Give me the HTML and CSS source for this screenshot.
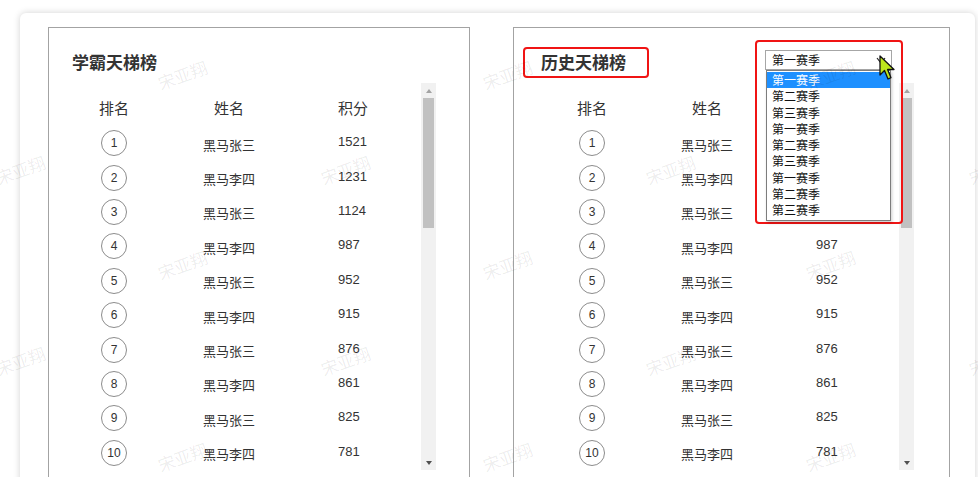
FILE: index.html
```html
<!DOCTYPE html>
<html lang="zh-CN">
<head>
    <meta charset="UTF-8">
    <meta name="viewport" content="width=device-width, initial-scale=1.0">
    <title>天梯榜</title>
    <link rel="stylesheet" href="styles.css">
</head>
<body>
    <div class="card">
        <div class="panels">
            <section class="panel panel-left">
                <div class="panel-head">
                    <h2 class="title">学霸天梯榜</h2>
                </div>
                <div class="rank-scroll">
                    <div class="rank-table" id="rank-left"></div>
                    <div class="scrollbar">
                        <div class="sb-btn"><i class="sb-up"></i></div>
                        <div class="sb-thumb"></div>
                        <div class="sb-btn sb-end"><i class="sb-down"></i></div>
                    </div>
                </div>
            </section>

            <section class="panel panel-right">
                <div class="panel-head">
                    <h2 class="title marked">历史天梯榜</h2>
                </div>
                <div class="rank-scroll">
                    <div class="rank-table" id="rank-right"></div>
                    <div class="scrollbar">
                        <div class="sb-btn"><i class="sb-up"></i></div>
                        <div class="sb-thumb"></div>
                        <div class="sb-btn sb-end"><i class="sb-down"></i></div>
                    </div>
                </div>

                <!-- opened season dropdown -->
                <div class="season-picker">
                    <div class="season-select">
                        第一赛季
                        <svg class="chevron" width="10" height="7" viewBox="0 0 10 7">
                            <polyline points="1,1 5,6 9,1" fill="none" stroke="#222" stroke-width="1.2"/>
                        </svg>
                    </div>
                    <ul class="season-list">
                        <li class="active">第一赛季</li>
                        <li>第二赛季</li>
                        <li>第三赛季</li>
                        <li>第一赛季</li>
                        <li>第二赛季</li>
                        <li>第三赛季</li>
                        <li>第一赛季</li>
                        <li>第二赛季</li>
                        <li>第三赛季</li>
                    </ul>
                </div>
                <svg class="cursor" width="17" height="26" viewBox="0 0 17 26">
                    <path d="M1 1 L1 20 L5.5 15.5 L9 24 L12 22.7 L8.6 14.5 L15 14.5 Z" fill="#bde61c" stroke="#111" stroke-width="1.3" stroke-linejoin="round"/>
                </svg>
            </section>
        </div>
    </div>

    <div class="watermark" id="watermark"></div>

    <script>
        // 榜单数据
        const scores = [1521, 1231, 1124, 987, 952, 915, 876, 861, 825, 781];

        function renderTable(el) {
            const head = document.createElement('div');
            head.className = 'rank-row rank-head';
            head.innerHTML = '<span class="col-rank">排名</span><span class="col-name">姓名</span><span class="col-score">积分</span>';
            el.appendChild(head);

            scores.forEach((score, i) => {
                const row = document.createElement('div');
                row.className = 'rank-row';

                const rank = document.createElement('span');
                rank.className = 'col-rank';
                const badge = document.createElement('i');
                badge.className = 'badge';
                badge.textContent = i + 1;
                rank.appendChild(badge);

                const name = document.createElement('span');
                name.className = 'col-name name';
                name.textContent = i % 2 === 0 ? '黑马张三' : '黑马李四';

                const num = document.createElement('span');
                num.className = 'col-score score';
                num.textContent = score;

                row.appendChild(rank);
                row.appendChild(name);
                row.appendChild(num);
                el.appendChild(row);
            });
        }

        renderTable(document.getElementById('rank-left'));
        renderTable(document.getElementById('rank-right'));

        // 水印
        const marks = document.getElementById('watermark');
        const rowsY = [75, 170, 265, 361, 457];
        rowsY.forEach((y, r) => {
            const xs = r % 2 === 0 ? [157, 482, 805] : [-5, 320, 645, 968];
            xs.forEach(x => {
                const s = document.createElement('span');
                s.textContent = '宋亚翔';
                s.style.left = x + 'px';
                s.style.top = (y - 12) + 'px';
                marks.appendChild(s);
            });
        });
    </script>
</body>
</html>
```

FILE: styles.css
```css
/* Global */
html, body {
    margin: 0;
    padding: 0;
    overflow: hidden;
    background: #ffffff;
}

body {
    font-family: "Liberation Sans", "Noto Sans CJK SC", sans-serif;
    color: #333333;
}

.card {
    margin: 13px 0 0 20px;
    width: 955px;
    height: 480px;
    padding: 14px 0 0 28px;
    box-sizing: border-box;
    background: #ffffff;
    border-radius: 6px;
    box-shadow: 0 0 7px rgba(0, 0, 0, 0.18);
}

.panels {
    display: flex;
    gap: 43px;
}

.panel {
    position: relative;
    height: 470px;
    border: 1px solid #a3a3a3;
    box-sizing: border-box;
}

.panel-left {
    width: 422px;
}

.panel-right {
    width: 437px;
}

/* Title */
.panel-head {
    height: 55px;
    padding-top: 19px;
    box-sizing: border-box;
    display: flex;
    align-items: flex-start;
}

.panel-left .panel-head {
    padding-left: 5px;
}

.panel-right .panel-head {
    padding-left: 9px;
}

.title {
    margin: 0;
    height: 31px;
    padding: 0 21px 0 16px;
    box-sizing: border-box;
    border: 2px solid transparent;
    border-radius: 4px;
    font-family: "Noto Sans CJK SC", sans-serif;
    font-size: 17px;
    font-weight: bold;
    line-height: 26px;
    color: #333333;
}

.title.marked {
    border-color: #f01414;
}

/* Ranking table */
.rank-scroll {
    display: flex;
    width: 357px;
    height: 387px;
}

.panel-left .rank-scroll {
    margin-left: 30px;
}

.panel-right .rank-scroll {
    margin-left: 43px;
}

.rank-table {
    flex: 1;
    overflow: hidden;
}

.scrollbar {
    width: 15px;
    display: flex;
    flex-direction: column;
    background: #f1f1f1;
}

.sb-btn {
    height: 15px;
    display: flex;
    align-items: center;
    justify-content: center;
}

.sb-end {
    margin-top: auto;
}

.sb-up {
    width: 0;
    height: 0;
    border-left: 3.5px solid transparent;
    border-right: 3.5px solid transparent;
    border-bottom: 4px solid #a3a3a3;
}

.sb-down {
    width: 0;
    height: 0;
    border-left: 3.5px solid transparent;
    border-right: 3.5px solid transparent;
    border-top: 4px solid #505050;
}

.sb-thumb {
    height: 130px;
    margin: 0 2px;
    background: #c1c1c1;
}

.rank-row {
    display: grid;
    grid-template-columns: 70px 160px 1fr;
    align-items: center;
    height: 34.4px;
    font-size: 13px;
}

.rank-head {
    height: 43px;
    padding-bottom: 7px;
    box-sizing: border-box;
    align-items: end;
    font-family: "Noto Sans CJK SC", sans-serif;
    font-size: 15px;
    line-height: 22px;
    color: #333333;
}

.col-rank,
.col-name {
    text-align: center;
}

.col-score {
    padding-left: 29px;
}

.badge {
    display: inline-block;
    width: 26px;
    height: 26px;
    border: 1px solid #8c8c8c;
    border-radius: 50%;
    box-sizing: border-box;
    font-style: normal;
    font-size: 12px;
    line-height: 24px;
    text-align: center;
    color: #333333;
    vertical-align: middle;
}

.name {
    padding-top: 5px;
    line-height: 18px;
    color: #333333;
}

.score {
    padding-bottom: 2px;
    line-height: 18px;
    color: #333333;
}

/* Season dropdown */
.season-picker {
    position: absolute;
    left: 241px;
    top: 12px;
    width: 148px;
    height: 184px;
    border: 2px solid #f01414;
    border-radius: 4px;
    box-sizing: border-box;
    z-index: 2;
}

.season-select {
    position: absolute;
    left: 8px;
    top: 8px;
    width: 127px;
    height: 20px;
    padding-left: 6px;
    box-sizing: border-box;
    border: 1px solid #a6a6a6;
    background: #ffffff;
    font-family: "Noto Sans CJK SC", sans-serif;
    font-size: 12px;
    line-height: 18px;
    color: #111111;
}

.chevron {
    position: absolute;
    right: 5px;
    top: 6px;
}

.season-list {
    position: absolute;
    left: 9px;
    top: 28px;
    width: 125px;
    margin: 0;
    padding: 1px 0 2px;
    list-style: none;
    box-sizing: border-box;
    border: 1px solid #7d7d7d;
    background: #ffffff;
    box-shadow: 1px 2px 3px rgba(0, 0, 0, 0.2);
}

.season-list li {
    height: 16.25px;
    padding-left: 5px;
    font-family: "Noto Sans CJK SC", sans-serif;
    font-size: 12px;
    line-height: 16px;
    color: #111111;
}

.season-list li.active {
    background: #1e90ff;
    color: #ffffff;
}

.cursor {
    position: absolute;
    left: 365px;
    top: 27px;
    z-index: 3;
}

/* Watermark */
.watermark {
    position: absolute;
    left: 0;
    top: 0;
    width: 978px;
    height: 477px;
    overflow: hidden;
    pointer-events: none;
    z-index: 5;
}

.watermark span {
    position: absolute;
    font-family: "Noto Sans CJK SC", sans-serif;
    font-size: 17px;
    line-height: 24px;
    color: rgba(0, 0, 0, 0.08);
    transform: rotate(-20deg);
    white-space: nowrap;
}
```
